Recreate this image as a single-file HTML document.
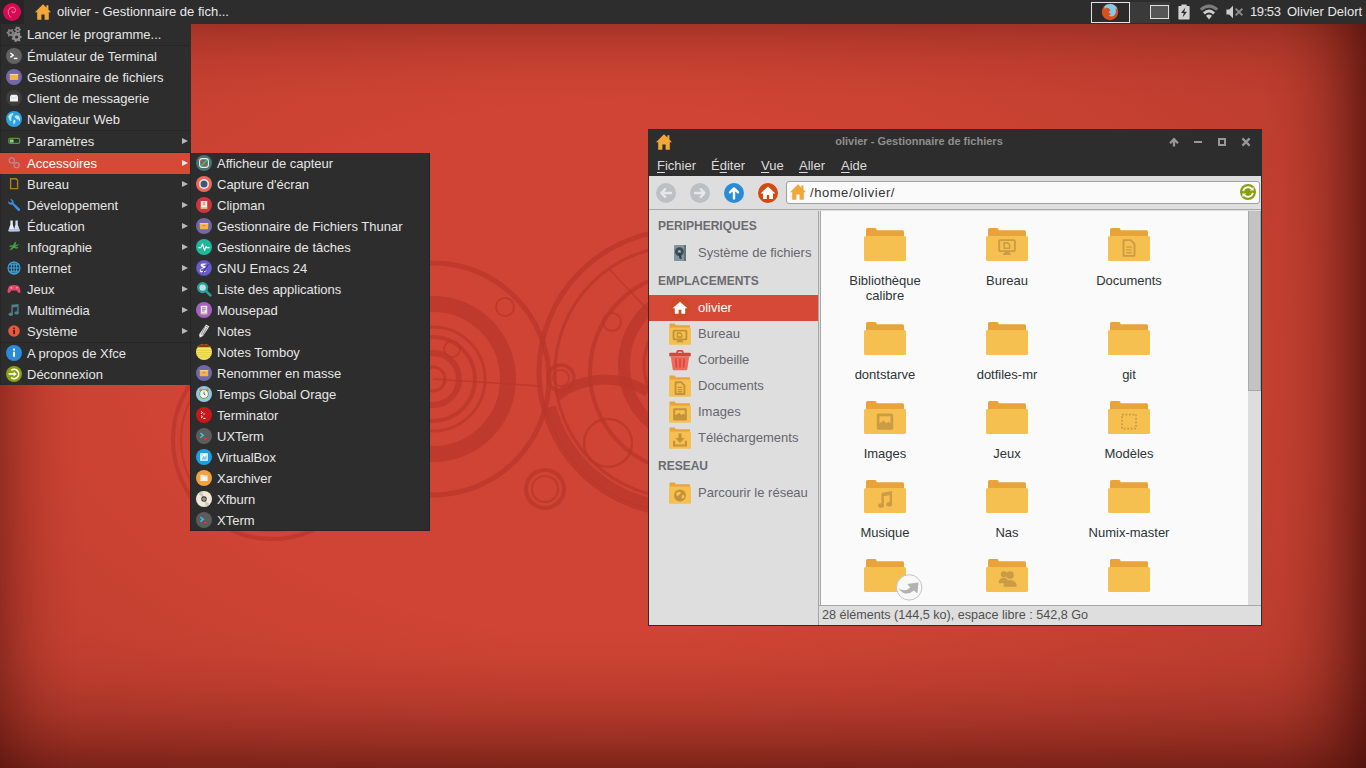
<!DOCTYPE html>
<html lang="fr"><head><meta charset="utf-8"><title>Bureau Xfce</title>
<style>
*{box-sizing:border-box;margin:0;padding:0}
html,body{width:1366px;height:768px;overflow:hidden}
body{font-family:"Liberation Sans",sans-serif;font-size:13px;position:relative;background:#cd4232;color:#dcdcdc}
svg{display:block}
#wall{position:absolute;left:0;top:0;width:1366px;height:768px;background:radial-gradient(ellipse 60% 62% at 44% 48%,rgba(60,10,5,0) 55%,rgba(60,10,5,.08) 85%,rgba(60,10,5,.16) 115%),linear-gradient(to left,rgba(60,10,5,0.620) 0px,rgba(60,10,5,0.384) 21px,rgba(60,10,5,0.205) 42px,rgba(60,10,5,0.087) 63px,rgba(60,10,5,0.025) 84px,rgba(60,10,5,0.000) 105px),linear-gradient(to right,rgba(60,10,5,0.360) 0px,rgba(60,10,5,0.223) 17px,rgba(60,10,5,0.119) 34px,rgba(60,10,5,0.050) 51px,rgba(60,10,5,0.014) 68px,rgba(60,10,5,0.000) 85px),linear-gradient(to top,rgba(60,10,5,0.520) 0px,rgba(60,10,5,0.322) 28px,rgba(60,10,5,0.172) 56px,rgba(60,10,5,0.073) 84px,rgba(60,10,5,0.021) 112px,rgba(60,10,5,0.000) 140px),linear-gradient(to bottom,rgba(60,10,5,0.440) 0px,rgba(60,10,5,0.273) 20px,rgba(60,10,5,0.145) 40px,rgba(60,10,5,0.062) 60px,rgba(60,10,5,0.018) 80px,rgba(60,10,5,0.000) 100px),#cf4434}
#deco{position:absolute;left:0;top:0}
#panel{position:absolute;left:0;top:0;width:1366px;height:24px;background:#2d2d2d;color:#e8e8e8}
#panel .abs{position:absolute}
#mbtn{position:absolute;left:0;top:0;width:24px;height:24px;background:#252525}
#task{position:absolute;left:35px;top:4px}
#tasklbl{position:absolute;left:57px;top:0;line-height:23px;height:24px;white-space:nowrap}
.menu{position:absolute;background:#2d2d2d;color:#e6e6e6}
#mainmenu{left:0;top:24px;width:191px;height:361px;border-left:1px solid #262626}
#submenu{left:190px;top:153px;width:240px;height:378px;border:1px solid #262626;border-top:0;border-right-color:#222;z-index:2}
.mi{position:relative;height:21px;line-height:21px;white-space:nowrap}
#mainmenu .mi{width:189px}
.mi.sel{background:#d64937;color:#fff}
#mainmenu .mi.sel{margin-left:-1px;width:190px;padding-left:1px}
#mainmenu .mi.sel .ic{left:6px}
#mainmenu .mi.sel .lb{left:27px}
#mainmenu .mi.sel .arr{left:182px}
.mi .ic{position:absolute;left:5px;top:2px;width:16px;height:16px}
#submenu .mi .ic{left:5px;top:1.5px}
.mi .lb{position:absolute;left:26px;top:0}
#submenu .mi .lb{left:26px;top:0}
.mi .arr{position:absolute;left:181px;top:7px;width:0;height:0;border-left:6px solid #b8b8b8;border-top:3.5px solid transparent;border-bottom:3.5px solid transparent}
.mi.sel .arr{border-left-color:#f4e6e2}
.sep{height:1px;background:#262626;width:189px}
/* window */
#win{position:absolute;left:648px;top:129px;width:614px;height:497px;background:#2d2d2d}
#win .abs{position:absolute}
#title{position:absolute;left:24px;top:0;width:494px;height:24px;color:#8f8f8f;font-weight:bold;font-size:11px;text-align:center;line-height:24px}
#menubar{position:absolute;left:0;top:24px;width:614px;height:23px;color:#dcdcdc}
#menubar span{position:absolute;top:1px;line-height:24px}
#menubar u{text-decoration:underline;text-underline-offset:2px}
#body{position:absolute;left:1px;top:47px;width:612px;height:449px;background:#dedede}
#toolbar{position:absolute;left:0;top:0;width:612px;height:34px;background:#dedede;border-bottom:1px solid #a8a8a8}
#loc{position:absolute;left:137px;top:5px;width:474px;height:23px;background:#fafafa;border:1px solid #a0a0a0;border-radius:3px;color:#333}
#loc .t{position:absolute;left:23px;top:0;line-height:21px;letter-spacing:.55px}
#side{position:absolute;left:0;top:35px;width:169px;height:414px;background:#dedede;color:#66666e}
#side .h{position:absolute;left:9px;font-weight:bold;font-size:12px;color:#6b6b70;line-height:16px}
#side .r{position:absolute;left:0;width:169px;height:26px;line-height:26px}
#side .r.sel{background:#d64937;color:#fff}
#side .r .ic{position:absolute;left:20px;top:2px;width:22px;height:22px}
#side .r .lb{position:absolute;left:49px;top:0;white-space:nowrap}
#split{position:absolute;left:169px;top:35px;width:3px;height:414px;background:#dedede;border-left:1px solid #a6a6a6;border-right:1px solid #a6a6a6}
#view{position:absolute;left:172px;top:35px;width:427px;height:394px;background:#fafafa;overflow:hidden;color:#2e3436}
#view .f{position:absolute;width:122px;text-align:center;line-height:15px}
#view .f svg{position:absolute;left:37px;top:0}
#view .f .n{position:absolute;left:0;top:52px;width:122px;text-align:center}
#sb{position:absolute;left:599px;top:35px;width:13px;height:394px;background:#dddddd}
#sb .th{position:absolute;left:0;top:0;width:13px;height:180px;background:#c3c3c3;border:1px solid #a9a9a9;border-top:0}
#status{position:absolute;left:170px;top:429px;width:442px;height:20px;background:#dedede;border-top:1px solid #a8a8a8;color:#505050;font-size:12.6px;line-height:19px}
#status span{position:absolute;left:3px;top:0;white-space:nowrap}

</style></head>
<body>
<div id="wall"></div>
<svg id="deco" width="1366" height="768" viewBox="0 0 1366 768">
<g fill="none" stroke="#b8362a" stroke-opacity="0.7">
<circle cx="433" cy="379" r="116" stroke-width="5"/>
<circle cx="433" cy="379" r="75" stroke-width="16"/>
<circle cx="433" cy="379" r="52" stroke-width="3"/>
<circle cx="433" cy="379" r="42" stroke-width="4"/>
<circle cx="433" cy="379" r="26" stroke-width="6"/>
<circle cx="433" cy="379" r="12" stroke-width="3"/>
<circle cx="505" cy="307" r="9" stroke-width="2"/>
<circle cx="452" cy="349" r="8" stroke-width="2"/>
<path d="M433 379 L540 386" stroke-width="1.5"/>
<circle cx="561" cy="378" r="13" stroke-width="3.5"/>
<circle cx="561" cy="378" r="8" stroke-width="1.5"/>
<circle cx="681" cy="372" r="142" stroke-width="5"/>
<circle cx="681" cy="372" r="126" stroke-width="3"/>
<circle cx="690" cy="372" r="100" stroke-width="4"/>
<circle cx="700" cy="365" r="76" stroke-width="12"/>
<circle cx="700" cy="365" r="56" stroke-width="3"/>
<circle cx="545" cy="489" r="19" stroke-width="4"/>
<circle cx="545" cy="489" r="13" stroke-width="2"/>
<circle cx="272" cy="440" r="99" stroke-width="4"/>
<circle cx="272" cy="440" r="91" stroke-width="2"/>
<circle cx="608" cy="443" r="24" stroke-width="2.5"/>
<circle cx="612" cy="322" r="9" stroke-width="2"/>
<path d="M557 396 A 80 80 0 0 1 648 392" stroke-width="10"/>
<path d="M550.6 406.9 A135 135 0 0 0 657.6 504.9" stroke-width="11"/>
<path d="M610 270 L648 310" stroke-width="1.5"/>
</g>
</svg>

<div id="panel">
<div id="mbtn"><svg width="24" height="24" viewBox="0 0 24 24"><circle cx="12" cy="12" r="9" fill="#d70a53"/><path d="M10.6 17.2 Q7.6 14.6 8.2 10.8 Q9.2 7.2 12.6 7.2 Q15.6 7.6 15.6 10.4 Q15.2 12.8 13 12.8 Q11.6 12.4 12 11" fill="none" stroke="#f08aa8" stroke-width="0.9" stroke-linecap="round"/></svg></div>
<div id="task"><svg width="16" height="16" viewBox="0 0 16 16"><path d="M8 0.2 L0 8.2 H2.2 V15.8 H6.4 V10.4 H9.6 V15.8 H13.8 V8.2 H16 L13.4 5.6 V1.2 H11.4 V3.6 Z" fill="#f2a73b"/></svg></div>
<div id="tasklbl">olivier - Gestionnaire de fich...</div>
<div class="abs" style="left:1091px;top:2px;width:39px;height:21px;border:1px solid #e2e2e2;background:#2b2b2b"></div>
<div class="abs" style="left:1130px;top:2px;width:40px;height:21px;background:#3a3a3a"></div>
<svg class="abs" style="left:1101px;top:3px" width="18" height="18" viewBox="0 0 18 18">
<circle cx="9" cy="9" r="8.2" fill="#d8501e"/>
<path d="M9 0.9 A8.1 8.1 0 0 1 16.6 6.4 Q15.2 5.2 14.4 5.6 Q15.6 8 14.6 10.6 Q13.4 13.4 10.4 13.6 Q8.4 13.4 7.6 12 Q9.4 12.2 10 10.8 Q8.6 10.6 7.8 9.6 Q7.4 8.4 8.6 8.2 L9.8 7 Q8 6.6 7.6 5 Q6 5.4 5.2 4.2 Q4.2 5 4 6.4 Q3 4.6 3.6 3 A8.1 8.1 0 0 1 9 0.9 Z" fill="#7fcdea"/>
</svg>
<div class="abs" style="left:1150px;top:5px;width:19px;height:14px;border:1px solid #e0e0e0;background:#565656"></div>
<svg class="abs" style="left:1178px;top:4px" width="12" height="16" viewBox="0 0 12 16"><path d="M3.4 0.6 H8.6 V2 H11 Q11.6 2 11.6 2.6 V14.8 Q11.6 15.4 11 15.4 H1 Q0.4 15.4 0.4 14.8 V2.6 Q0.4 2 1 2 H3.4 Z" fill="#d2d2d2"/><path d="M7.4 3.6 L3 9 H5.8 L4.6 13.6 L9 7.8 H6.2 Z" fill="#2d2d2d"/></svg>
<svg class="abs" style="left:1199px;top:3px" width="20" height="17" viewBox="0 0 20 17">
<path d="M0.8 5.4 Q10 -2.6 19.2 5.4 L17.2 7.8 Q10 1.6 2.8 7.8 Z" fill="#7c7c7c"/>
<path d="M4 9.2 Q10 4 16 9.2 L14.2 11.4 Q10 7.8 5.8 11.4 Z" fill="#cfcfcf"/>
<path d="M7 12.8 Q10 10.2 13 12.8 L10 16.4 Z" fill="#cfcfcf"/>
</svg>
<svg class="abs" style="left:1226px;top:5px" width="18" height="14" viewBox="0 0 18 14"><path d="M0.4 4.4 H3.2 L7 0.8 V13.2 L3.2 9.6 H0.4 Z" fill="#cdcdcd"/><path d="M9.6 3.6 L16.4 10.4 M16.4 3.6 L9.6 10.4" stroke="#8c8c8c" stroke-width="1.8"/></svg>
<div class="abs" style="left:1250px;top:0;line-height:23px;white-space:nowrap;letter-spacing:-0.4px">19:53</div>
<div class="abs" style="left:1287px;top:0;line-height:23px;white-space:nowrap">Olivier Delort</div>
</div>

<div class="menu" id="mainmenu">
<div class="mi"><span class="ic"><svg width="16" height="16" viewBox="0 0 16 16"><path d="M15.87 10.41 L15.87 11.59 L14.38 12.32 L13.99 13.13 L14.35 14.75 L13.42 15.49 L11.92 14.78 L11.05 14.97 L10.01 16.27 L8.85 16.00 L8.47 14.39 L7.77 13.83 L6.11 13.82 L5.60 12.75 L6.63 11.45 L6.63 10.55 L5.60 9.25 L6.11 8.18 L7.77 8.17 L8.47 7.61 L8.85 6.00 L10.01 5.73 L11.05 7.03 L11.92 7.22 L13.42 6.51 L14.35 7.25 L13.99 8.87 L14.38 9.68 Z M9.00 11.00 a1.6 1.6 0 1 0 3.2 0 a1.6 1.6 0 1 0 -3.2 0 Z" fill="#8d8d8d" fill-rule="evenodd"/><path d="M8.76 6.25 L8.76 7.35 L7.46 7.99 L7.06 8.69 L7.16 10.13 L6.21 10.68 L5.00 9.87 L4.20 9.87 L2.99 10.68 L2.04 10.13 L2.14 8.69 L1.74 7.99 L0.44 7.35 L0.44 6.25 L1.74 5.61 L2.14 4.91 L2.04 3.47 L2.99 2.92 L4.20 3.73 L5.00 3.73 L6.21 2.92 L7.16 3.47 L7.06 4.91 L7.46 5.61 Z M3.40 6.80 a1.2 1.2 0 1 0 2.4 0 a1.2 1.2 0 1 0 -2.4 0 Z" fill="#808080" fill-rule="evenodd"/><path d="M14.87 3.17 L14.87 4.03 L13.82 4.52 L13.50 5.06 L13.61 6.22 L12.86 6.65 L11.91 5.98 L11.29 5.98 L10.34 6.65 L9.59 6.22 L9.70 5.06 L9.38 4.52 L8.33 4.03 L8.33 3.17 L9.38 2.68 L9.70 2.14 L9.59 0.98 L10.34 0.55 L11.29 1.22 L11.91 1.22 L12.86 0.55 L13.61 0.98 L13.50 2.14 L13.82 2.68 Z M10.70 3.60 a0.9 0.9 0 1 0 1.8 0 a0.9 0.9 0 1 0 -1.8 0 Z" fill="#8d8d8d" fill-rule="evenodd"/></svg></span><span class="lb">Lancer le programme...</span></div>
<div class="sep"></div>
<div class="mi"><span class="ic"><svg width="16" height="16" viewBox="0 0 16 16"><circle cx="8" cy="8" r="8" fill="#626262"/><path d="M4.4 5 L7.2 7.2 L4.4 9.4" fill="none" stroke="#fff" stroke-width="1.5"/><path d="M7.8 10.4 H11.4" stroke="#fff" stroke-width="1.5"/></svg></span><span class="lb">Émulateur de Terminal</span></div>
<div class="mi"><span class="ic"><svg width="16" height="16" viewBox="0 0 16 16"><circle cx="8" cy="8" r="8" fill="#7068a8"/><rect x="3.8" y="5" width="8.4" height="6" rx="0.6" fill="#f4b24a"/><path d="M3.8 5.5 H12.2" stroke="#f9d48a" stroke-width="1.2"/></svg></span><span class="lb">Gestionnaire de fichiers</span></div>
<div class="mi"><span class="ic"><svg width="16" height="16" viewBox="0 0 16 16"><circle cx="8" cy="8" r="8" fill="#3d3d3d"/><path d="M4 6.2 L5.4 4.8 H10.6 L12 6.2 V11.4 H4 Z" fill="#f4f4f4"/><path d="M4 6.4 L8 8.4 L12 6.4" fill="none" stroke="#cfcfcf" stroke-width="0.8"/></svg></span><span class="lb">Client de messagerie</span></div>
<div class="mi"><span class="ic"><svg width="16" height="16" viewBox="0 0 16 16"><circle cx="8" cy="8" r="8" fill="#2ba1df"/><path d="M2.2 5.4 Q3.6 2.6 6.6 2 Q8 2.6 7 4 Q5.4 4.4 5.6 6 Q4.6 7.6 5.6 9 Q5.2 10.6 4.2 10 Q2.8 8 2.2 5.4 Z M8.6 5 Q10.8 3.6 13 5 Q14.6 7.4 13.6 10.6 Q12.6 9.8 12.4 8.4 Q10.6 8.6 10 7.4 Q8.6 6.6 8.6 5 Z M7.6 8.4 Q9.4 8.6 9.6 10.4 Q9 12.8 7.6 13.6 Q6.8 11 7.6 8.4 Z" fill="#bfe6f7"/></svg></span><span class="lb">Navigateur Web</span></div>
<div class="sep"></div>
<div class="mi"><span class="ic"><svg width="16" height="16" viewBox="0 0 16 16"><rect x="2.8" y="5.4" width="10.8" height="5" rx="1.3" fill="none" stroke="#4f9a32" stroke-width="1.3"/><rect x="3.8" y="6.4" width="3.8" height="3" rx="0.5" fill="#9ad07c"/></svg></span><span class="lb">Paramètres</span><span class="arr"></span></div>
<div class="sep"></div>
<div class="mi sel"><span class="ic"><svg width="16" height="16" viewBox="0 0 16 16"><circle cx="5.8" cy="5.4" r="2.6" fill="none" stroke="#b49ac0" stroke-opacity="0.8" stroke-width="1.1"/><circle cx="10.6" cy="10.2" r="2.6" fill="none" stroke="#b49ac0" stroke-opacity="0.8" stroke-width="1.1"/></svg></span><span class="lb">Accessoires</span><span class="arr"></span></div>
<div class="mi"><span class="ic"><svg width="16" height="16" viewBox="0 0 16 16"><path d="M4.6 2.8 H10.2 L11.6 4.2 V12.6 H4.6 Z" fill="none" stroke="#b27e1d" stroke-width="1.4"/></svg></span><span class="lb">Bureau</span><span class="arr"></span></div>
<div class="mi"><span class="ic"><svg width="16" height="16" viewBox="0 0 16 16"><path d="M2.2 4 Q1.8 7 4.8 7.8 L6.2 7.4 L11.6 13.6 Q12.8 14.6 13.8 13.6 Q14.6 12.6 13.6 11.6 L7.6 6 Q8 3 5.2 2 L4.2 2.4 L6 4.2 L5.4 5.6 L4 5.8 L2.2 4 Z" fill="#3a90e0"/></svg></span><span class="lb">Développement</span><span class="arr"></span></div>
<div class="mi"><span class="ic"><svg width="16" height="16" viewBox="0 0 16 16"><path d="M4.4 2.6 H6.8 V6.4 L8.6 12.6 Q8.6 13.6 7.6 13.6 H3.2 Q2.2 13.6 2.4 12.6 L4.4 6.4 Z" fill="#e6eefb"/><path d="M9.4 2.6 H11.8 V6.4 L13.8 12.6 Q14 13.6 13 13.6 H8.6 Q7.6 13.6 7.8 12.6 L9.4 6.4 Z" fill="#cfdcf2"/><path d="M3.2 11 H8 L8.6 12.8 H2.6 Z M8.6 11 H13.2 L13.8 12.8 H8 Z" fill="#a8c0e8"/></svg></span><span class="lb">Éducation</span><span class="arr"></span></div>
<div class="mi"><span class="ic"><svg width="16" height="16" viewBox="0 0 16 16"><path d="M2.6 11.6 Q6 8.6 7.4 5.4 Q8.4 3 10.4 2.4 Q9.8 4.4 9.4 6 Q11.8 5.2 13.6 5.6 Q10.6 7.2 8.8 8.2 Q6.6 9.4 5.8 11.2 Q5.2 9.8 2.6 11.6 Z" fill="#3da53b"/><path d="M3.6 7.6 Q5.6 6.2 7.4 7.8 Q9.6 9.6 12 8.4" fill="none" stroke="#3da53b" stroke-width="1.3"/></svg></span><span class="lb">Infographie</span><span class="arr"></span></div>
<div class="mi"><span class="ic"><svg width="16" height="16" viewBox="0 0 16 16"><g fill="none" stroke="#39a6e0" stroke-width="1.1"><circle cx="8" cy="8" r="6"/><ellipse cx="8" cy="8" rx="2.8" ry="6"/><path d="M2 8 H14 M8 2 V14 M3 4.8 H13 M3 11.2 H13"/></g></svg></span><span class="lb">Internet</span><span class="arr"></span></div>
<div class="mi"><span class="ic"><svg width="16" height="16" viewBox="0 0 16 16"><path d="M4.4 4.6 Q8 3.6 11.6 4.6 Q13.6 5.2 14.4 9.4 Q14.8 12.2 13.2 12 Q12 11.6 10.6 9.4 H5.4 Q4 11.6 2.8 12 Q1.2 12.2 1.6 9.4 Q2.4 5.2 4.4 4.6 Z" fill="#e0496b"/><circle cx="11" cy="6.8" r="0.8" fill="#f7b0c0"/><path d="M4.4 6.8 H6.4 M5.4 5.8 V7.8" stroke="#f7b0c0" stroke-width="0.8"/></svg></span><span class="lb">Jeux</span><span class="arr"></span></div>
<div class="mi"><span class="ic"><svg width="16" height="16" viewBox="0 0 16 16"><g fill="#4f7f8c"><path d="M5.4 2.8 L12.6 2 V11 H11.2 V5 L6.8 5.6 V12.4 H5.4 Z"/><ellipse cx="4.8" cy="12.2" rx="2.2" ry="1.7"/><ellipse cx="10.6" cy="10.9" rx="2.2" ry="1.7"/></g></svg></span><span class="lb">Multimédia</span><span class="arr"></span></div>
<div class="mi"><span class="ic"><svg width="16" height="16" viewBox="0 0 16 16"><circle cx="8" cy="8" r="5.8" fill="#e9573f"/><rect x="7.2" y="7" width="1.7" height="4.2" fill="#4a1a10"/><rect x="7.2" y="4.6" width="1.7" height="1.6" fill="#4a1a10"/></svg></span><span class="lb">Système</span><span class="arr"></span></div>
<div class="sep"></div>
<div class="mi"><span class="ic"><svg width="16" height="16" viewBox="0 0 16 16"><circle cx="8" cy="8" r="8" fill="#2a8bd8"/><rect x="7.1" y="6.8" width="1.9" height="5" fill="#fff"/><rect x="7.1" y="3.6" width="1.9" height="2" fill="#fff"/></svg></span><span class="lb">A propos de Xfce</span></div>
<div class="mi"><span class="ic"><svg width="16" height="16" viewBox="0 0 16 16"><circle cx="8" cy="8" r="8" fill="#8a9f11"/><path d="M5.2 4.4 A4.6 4.6 0 1 1 5.2 11.6" fill="none" stroke="#fff" stroke-width="1.6"/><path d="M2.6 8 H8.6" stroke="#fff" stroke-width="1.6"/><path d="M7.6 5.4 L10.6 8 L7.6 10.6 Z" fill="#fff"/></svg></span><span class="lb">Déconnexion</span></div>
</div>
<div class="menu" id="submenu">
<div class="mi"><span class="ic"><svg width="16" height="16" viewBox="0 0 16 16"><circle cx="8" cy="8" r="8" fill="#4a7272"/><rect x="3.6" y="3.6" width="8.8" height="8.8" rx="2.6" fill="none" stroke="#e8eeee" stroke-width="1.1"/><path d="M5 5 L11 11" stroke="#e0444c" stroke-width="1.2"/><path d="M11 5 L5 11" stroke="#3fcf4a" stroke-width="1.2"/></svg></span><span class="lb">Afficheur de capteur</span></div>
<div class="mi"><span class="ic"><svg width="16" height="16" viewBox="0 0 16 16"><circle cx="8" cy="8" r="8" fill="#f0685a"/><circle cx="8" cy="8" r="4.9" fill="#f6f2f2"/><circle cx="8" cy="8" r="3.5" fill="#3c5a77"/></svg></span><span class="lb">Capture d'écran</span></div>
<div class="mi"><span class="ic"><svg width="16" height="16" viewBox="0 0 16 16"><circle cx="8" cy="8" r="8" fill="#d0343c"/><rect x="4.8" y="4" width="6.4" height="8" rx="0.6" fill="#fbeee6"/><rect x="4.8" y="10.2" width="6.4" height="1.8" fill="#e8b088"/><rect x="6.8" y="5" width="2.4" height="3.4" fill="#e8a090"/></svg></span><span class="lb">Clipman</span></div>
<div class="mi"><span class="ic"><svg width="16" height="16" viewBox="0 0 16 16"><circle cx="8" cy="8" r="8" fill="#7068a8"/><rect x="3.8" y="5" width="8.4" height="6.2" rx="0.6" fill="#f4b24a"/><path d="M3.8 5.6 H12.2" stroke="#f8cf7e" stroke-width="1.2"/><path d="M6 7 H10 L8 8.6 Z" fill="#d08a2a"/></svg></span><span class="lb">Gestionnaire de Fichiers Thunar</span></div>
<div class="mi"><span class="ic"><svg width="16" height="16" viewBox="0 0 16 16"><circle cx="8" cy="8" r="8" fill="#1fb89a"/><path d="M2.4 8.6 H5 L6.4 5 L8.6 11.4 L10 7.6 L10.8 8.6 H13.6" fill="none" stroke="#fff" stroke-width="1.1" stroke-linejoin="round"/></svg></span><span class="lb">Gestionnaire de tâches</span></div>
<div class="mi"><span class="ic"><svg width="16" height="16" viewBox="0 0 16 16"><circle cx="8" cy="8" r="8" fill="#5a4db8"/><circle cx="8" cy="8" r="7.2" fill="#6a5cc8"/><path d="M5.4 3.8 Q8.6 3 10.8 3.8 Q8 5.2 6.4 5.6 Q8.8 6 10.6 7 Q7 8.2 5 9.6 Q4 10.6 5.6 11 Q8.6 11.4 11 10.6 Q9 12.6 6 12.6 Q3.4 12.2 3.6 10.4 Q4.4 8.6 7.2 7.6 Q4.8 6.8 4.6 5.6 Q4.4 4.6 5.4 3.8 Z" fill="#f4f2fc"/><path d="M12.4 4.4 L6.4 13.2" stroke="#2c2470" stroke-width="0.9"/></svg></span><span class="lb">GNU Emacs 24</span></div>
<div class="mi"><span class="ic"><svg width="16" height="16" viewBox="0 0 16 16"><circle cx="6.6" cy="6.6" r="5.6" fill="#25a597"/><circle cx="6.6" cy="6.6" r="3.2" fill="#c3dcea"/><path d="M10.4 10.4 L14.4 14.4" stroke="#25a597" stroke-width="2.6" stroke-linecap="round"/></svg></span><span class="lb">Liste des applications</span></div>
<div class="mi"><span class="ic"><svg width="16" height="16" viewBox="0 0 16 16"><circle cx="8" cy="8" r="8" fill="#a563bd"/><rect x="4.8" y="3.8" width="6.4" height="8.4" rx="0.5" fill="#efe6f2"/><path d="M6 5.8 H9.8 M6 7.4 H9.8 M6 9 H8.6" stroke="#8c7a98" stroke-width="0.9"/><rect x="4.8" y="10.8" width="6.4" height="1.4" fill="#d8c0a8"/></svg></span><span class="lb">Mousepad</span></div>
<div class="mi"><span class="ic"><svg width="16" height="16" viewBox="0 0 16 16"><path d="M10 1.6 L13.4 3.4 L7 13 L3 15 L3.4 11 Z" fill="#ececec"/><path d="M8.8 4 L5.2 11.6 M10.6 5 L6.6 12.4 M9.2 2.8 L12.6 4.6" stroke="#6a6a6a" stroke-width="0.8"/><path d="M3.2 13 L4.6 14.2 L3 15 Z" fill="#444"/></svg></span><span class="lb">Notes</span></div>
<div class="mi"><span class="ic"><svg width="16" height="16" viewBox="0 0 16 16"><circle cx="8" cy="8" r="8" fill="#f4e55a"/><path d="M1.6 3.2 A8 8 0 0 1 14.4 3.2 Z" fill="#8a3a12"/><path d="M0.4 6.4 H15.6 M0.2 8.6 H15.8 M0.6 10.8 H15.4 M2 13 H14" stroke="#d8c63c" stroke-width="0.7"/></svg></span><span class="lb">Notes Tomboy</span></div>
<div class="mi"><span class="ic"><svg width="16" height="16" viewBox="0 0 16 16"><circle cx="8" cy="8" r="8" fill="#7068a8"/><rect x="3.8" y="5" width="8.4" height="6.2" rx="0.6" fill="#f4b24a"/><path d="M3.8 5.6 H12.2" stroke="#f8cf7e" stroke-width="1.2"/><path d="M6 7 H10 L8 8.6 Z" fill="#d08a2a"/></svg></span><span class="lb">Renommer en masse</span></div>
<div class="mi"><span class="ic"><svg width="16" height="16" viewBox="0 0 16 16"><circle cx="8" cy="8" r="8" fill="#8fc8ea"/><path d="M4.2 12.8 L5.4 11.4 M11.8 12.8 L10.6 11.4" stroke="#e8b83a" stroke-width="1.2"/><circle cx="4.6" cy="3.8" r="1.3" fill="#e87a3a"/><circle cx="11.4" cy="3.8" r="1.3" fill="#e87a3a"/><circle cx="8" cy="8" r="4.4" fill="#f7f7ee" stroke="#6aa060" stroke-width="1"/><path d="M8 5.6 V8.2 L9.4 9" fill="none" stroke="#4a6a4a" stroke-width="0.9"/></svg></span><span class="lb">Temps Global Orage</span></div>
<div class="mi"><span class="ic"><svg width="16" height="16" viewBox="0 0 16 16"><circle cx="8" cy="8" r="8" fill="#c9181c"/><path d="M5 4.4 L6.6 5.6 L5 6.8" fill="none" stroke="#fff" stroke-width="1"/><path d="M7.4 7 H8.8" stroke="#fff" stroke-width="1"/><path d="M5 8.6 L6.6 9.8 L5 11" fill="none" stroke="#fff" stroke-width="1"/><path d="M7.4 11.4 H9.4" stroke="#fff" stroke-width="1"/></svg></span><span class="lb">Terminator</span></div>
<div class="mi"><span class="ic"><svg width="16" height="16" viewBox="0 0 16 16"><circle cx="8" cy="8" r="8" fill="#5c5c5c"/><path d="M4.4 5 L7.2 7.3 L4.4 9.6" fill="none" stroke="#36c4e0" stroke-width="1.5"/><path d="M7.8 10.6 H11.4" stroke="#e8303a" stroke-width="1.5"/></svg></span><span class="lb">UXTerm</span></div>
<div class="mi"><span class="ic"><svg width="16" height="16" viewBox="0 0 16 16"><circle cx="8" cy="8" r="8" fill="#1c9fe2"/><rect x="4.2" y="4.2" width="7.6" height="7.6" fill="#f4fbff"/><path d="M5.4 10.6 L7.6 6.8 L8.8 8.6 L10.6 5.4 V10.6 Z" fill="#7cc4ea"/><path d="M5.2 5.4 H7 M5.2 6.6 H6.4" stroke="#7cc4ea" stroke-width="0.7"/></svg></span><span class="lb">VirtualBox</span></div>
<div class="mi"><span class="ic"><svg width="16" height="16" viewBox="0 0 16 16"><circle cx="8" cy="8" r="8" fill="#f0a23f"/><path d="M4.4 4.8 H7 L7.8 5.6 H11.6 V11 H4.4 Z" fill="#fbf3ea"/><path d="M4.4 6.6 H11.6" stroke="#e4d2be" stroke-width="0.7"/></svg></span><span class="lb">Xarchiver</span></div>
<div class="mi"><span class="ic"><svg width="16" height="16" viewBox="0 0 16 16"><circle cx="8" cy="8" r="8" fill="#efe9d6"/><path d="M8 8 L2.4 2.4 A8 8 0 0 1 6 0.3 Z M8 8 L13.6 13.6 A8 8 0 0 1 10 15.7 Z" fill="#cfcabb"/><circle cx="8" cy="8" r="2.7" fill="#2f2f2f"/><circle cx="8" cy="8" r="1.6" fill="#efe9d6"/><circle cx="8" cy="8" r="0.8" fill="#2f2f2f"/></svg></span><span class="lb">Xfburn</span></div>
<div class="mi"><span class="ic"><svg width="16" height="16" viewBox="0 0 16 16"><circle cx="8" cy="8" r="8" fill="#5c5c5c"/><path d="M4.4 5 L7.2 7.3 L4.4 9.6" fill="none" stroke="#36c4e0" stroke-width="1.5"/><path d="M7.8 10.6 H11.4" stroke="#e8303a" stroke-width="1.5"/></svg></span><span class="lb">XTerm</span></div>
</div>
<div id="win">
<div class="abs" style="left:8px;top:5px"><svg width="16" height="16" viewBox="0 0 16 16"><path d="M8 0.2 L0 8.2 H2.2 V15.8 H6.4 V10.4 H9.6 V15.8 H13.8 V8.2 H16 L13.4 5.6 V1.2 H11.4 V3.6 Z" fill="#f2a73b"/></svg></div>
<div id="title">olivier - Gestionnaire de fichiers</div>
<svg class="abs" style="left:520px;top:8px" width="12" height="11" viewBox="0 0 12 11"><path d="M6 9.6 V3 M2 6.2 L6 2.2 L10 6.2" fill="none" stroke="#989898" stroke-width="2.3" stroke-linejoin="miter"/></svg>
<div class="abs" style="left:546px;top:12px;width:8px;height:2px;background:#989898"></div>
<div class="abs" style="left:570px;top:9px;width:8px;height:8px;border:2px solid #989898"></div>
<svg class="abs" style="left:593px;top:8px" width="10" height="10" viewBox="0 0 10 10"><path d="M1.4 1.4 L8.6 8.6 M8.6 1.4 L1.4 8.6" stroke="#989898" stroke-width="2.2"/></svg>
<div id="menubar"><span style="left:9px"><u>F</u>ichier</span><span style="left:63px">É<u>d</u>iter</span><span style="left:113px"><u>V</u>ue</span><span style="left:151px"><u>A</u>ller</span><span style="left:193px"><u>A</u>ide</span></div>
<div id="body">
<div id="toolbar"><svg class="abs" style="left:7px;top:7px" width="20" height="20" viewBox="0 0 20 20"><circle cx="10" cy="10" r="10" fill="#bdc0c2"/><path d="M15 10 H5.6 M9.2 6.2 L5.4 10 L9.2 13.8" fill="none" stroke="#e6e7e8" stroke-width="2.4" stroke-linecap="round" stroke-linejoin="round"/></svg>
<svg class="abs" style="left:41px;top:7px" width="20" height="20" viewBox="0 0 20 20"><circle cx="10" cy="10" r="10" fill="#bdc0c2"/><path d="M5 10 H14.4 M10.8 6.2 L14.6 10 L10.8 13.8" fill="none" stroke="#e6e7e8" stroke-width="2.4" stroke-linecap="round" stroke-linejoin="round"/></svg>
<svg class="abs" style="left:75px;top:7px" width="20" height="20" viewBox="0 0 20 20"><circle cx="10" cy="10" r="10" fill="#2a8bd6"/><path d="M10 15.4 V5.6 M6 9.4 L10 5.4 L14 9.4" fill="none" stroke="#fff" stroke-width="2.4" stroke-linecap="round" stroke-linejoin="round"/></svg>
<svg class="abs" style="left:109px;top:7px" width="20" height="20" viewBox="0 0 20 20"><circle cx="10" cy="10" r="10" fill="#d5480f"/><path d="M10 3.6 L2.6 10.4 H5 V16 H8.8 V12 H11.2 V16 H15 V10.4 H17.4 Z" fill="#fff"/></svg>
<div id="loc"><div class="abs" style="left:3px;top:2px"><svg width="16" height="16" viewBox="0 0 16 16"><path d="M8 0.2 L0 8.2 H2.2 V15.8 H6.4 V10.4 H9.6 V15.8 H13.8 V8.2 H16 L13.4 5.6 V1.2 H11.4 V3.6 Z" fill="#f2a73b"/></svg></div><span class="t">/home/olivier/</span>
<svg class="abs" style="left:453px;top:2px" width="16" height="16" viewBox="0 0 17 17"><circle cx="8.5" cy="8.5" r="8.5" fill="#8a9f0e"/><path d="M3.4 7.6 A5.2 5.2 0 0 1 12.6 5.4" fill="none" stroke="#fff" stroke-width="1.9"/><path d="M13.6 9.4 A5.2 5.2 0 0 1 4.4 11.6" fill="none" stroke="#fff" stroke-width="1.9"/><path d="M10.6 6.8 L14.6 7 L14.2 3 Z M6.4 10.2 L2.4 10 L2.8 14 Z" fill="#fff"/></svg>
</div></div>
<div id="side">
<div class="h" style="top:7px">PERIPHERIQUES</div>
<div class="h" style="top:62px">EMPLACEMENTS</div>
<div class="h" style="top:247px">RESEAU</div>
<div class="r" style="top:29px"><span class="ic"><svg width="22" height="22" viewBox="0 0 22 22"><rect x="5" y="3" width="12" height="16" rx="0.6" fill="#7f979b"/><rect x="15" y="3" width="2" height="16" fill="#5e767a"/><circle cx="10.4" cy="9.6" r="4.4" fill="#3b4c54"/><circle cx="10.4" cy="9.4" r="1.5" fill="#a3b6ba"/><path d="M10.8 10.4 l2.2 6.4 h-2.4 l-1.2 -5.8 z" fill="#2d3c43"/></svg></span><span class="lb">Système de fichiers</span></div>
<div class="r sel" style="top:84px"><span class="ic"><svg width="22" height="22" viewBox="0 0 22 22"><circle cx="11" cy="11" r="10.4" fill="#cf4a26"/><path d="M11 4.8 L3.6 11.2 H5.8 V16.8 H9.6 V12.8 H12.4 V16.8 H16.2 V11.2 H18.4 Z" fill="#fff"/></svg></span><span class="lb">olivier</span></div>
<div class="r" style="top:110px"><span class="ic"><svg width="22" height="22" viewBox="0 0 22 22"><path d="M0.5 1.3 Q0.5 0.5 1.3 0.5 H5.6 Q6.4 0.5 6.4 1.3 V2.3 H20.2 Q21 2.3 21 3.1 V10 H0.5 Z" fill="#e8a33b"/><rect x="0" y="4.6" width="22" height="17.2" rx="1.2" fill="#f5c04f"/><g fill="none" stroke="#c3923b" stroke-width="1.9"><rect x="4.6" y="7.6" width="12.8" height="8.8" rx="0.6"/><path d="M8.4 10 h2.8 l1.6 1.6 v2.4 h-4.4 z" stroke-width="1.4"/></g><path d="M9.5 16.6 h3 l2.3 2.6 h-7.6 z" fill="#c3923b"/></svg></span><span class="lb">Bureau</span></div>
<div class="r" style="top:136px"><span class="ic"><svg width="22" height="22" viewBox="0 0 22 22"><path d="M7.4 2.8 Q7.4 1 9.2 1 H12.8 Q14.6 1 14.6 2.8 V4.2 H13 V2.8 H9 V4.2 H7.4 Z" fill="#d8473b"/><path d="M1.2 3.8 H20.8 Q21.8 3.8 21.8 4.8 V6.4 Q21.8 7.4 20.8 7.4 H1.2 Q0.2 7.4 0.2 6.4 V4.8 Q0.2 3.8 1.2 3.8 Z" fill="#d8473b"/><path d="M1.8 7.4 H20.2 L18.4 20 Q18.2 21.2 17 21.2 H5 Q3.8 21.2 3.6 20 Z" fill="#ef6a5d"/><path d="M6.8 10.2 L7.4 18 M11 10.2 V18 M15.2 10.2 L14.6 18" stroke="#d5493d" stroke-width="1.7" stroke-linecap="round"/></svg></span><span class="lb">Corbeille</span></div>
<div class="r" style="top:162px"><span class="ic"><svg width="22" height="22" viewBox="0 0 22 22"><path d="M0.5 1.3 Q0.5 0.5 1.3 0.5 H5.6 Q6.4 0.5 6.4 1.3 V2.3 H20.2 Q21 2.3 21 3.1 V10 H0.5 Z" fill="#e8a33b"/><rect x="0" y="4.6" width="22" height="17.2" rx="1.2" fill="#f5c04f"/><g fill="none" stroke="#c3923b" stroke-width="1.9" stroke-linejoin="round"><path d="M6.6 7.2 h5.6 l3.2 3.2 v8.6 h-8.8 z"/><path d="M8.8 12.4 h4.4 M8.8 14.6 h4.4 M8.8 16.8 h4.4" stroke-width="1.4"/></g></svg></span><span class="lb">Documents</span></div>
<div class="r" style="top:188px"><span class="ic"><svg width="22" height="22" viewBox="0 0 22 22"><path d="M0.5 1.3 Q0.5 0.5 1.3 0.5 H5.6 Q6.4 0.5 6.4 1.3 V2.3 H20.2 Q21 2.3 21 3.1 V10 H0.5 Z" fill="#e8a33b"/><rect x="0" y="4.6" width="22" height="17.2" rx="1.2" fill="#f5c04f"/><rect x="4.2" y="7.2" width="13.6" height="12.4" rx="1.2" fill="#c3923b"/><path d="M6.2 9.2 h9.6 v5 l-1.6 -1.6 l-1.8 1.4 l-2.2 -2.2 l-4 2.6 z" fill="#f5c04f"/></svg></span><span class="lb">Images</span></div>
<div class="r" style="top:214px"><span class="ic"><svg width="22" height="22" viewBox="0 0 22 22"><path d="M0.5 1.3 Q0.5 0.5 1.3 0.5 H5.6 Q6.4 0.5 6.4 1.3 V2.3 H20.2 Q21 2.3 21 3.1 V10 H0.5 Z" fill="#e8a33b"/><rect x="0" y="4.6" width="22" height="17.2" rx="1.2" fill="#f5c04f"/><g fill="#c3923b"><path d="M9.4 6.4 h3.2 v4.6 h3.2 l-4.8 5 l-4.8 -5 h3.2 z"/><path d="M4 13.8 h2.2 v3.6 h9.6 v-3.6 h2.2 v5.8 h-14 z"/></g></svg></span><span class="lb">Téléchargements</span></div>
<div class="r" style="top:269px"><span class="ic"><svg width="22" height="22" viewBox="0 0 22 22"><path d="M0.5 1.3 Q0.5 0.5 1.3 0.5 H5.6 Q6.4 0.5 6.4 1.3 V2.3 H20.2 Q21 2.3 21 3.1 V10 H0.5 Z" fill="#e8a33b"/><rect x="0" y="4.6" width="22" height="17.2" rx="1.2" fill="#f5c04f"/><circle cx="11" cy="13.4" r="6" fill="#c3923b"/><path d="M8 10.6 q2 -1.4 3.6 -0.6 q0.6 1.6 -1 2.4 q-1.6 0.4 -1.2 2 q-1.8 -0.4 -2.2 -2 q0 -1 0.8 -1.8 z M13.4 13 q1.6 -0.2 2.2 1 q-0.4 2 -2 3 q-1 -1 -0.8 -2.2 q-0.4 -1.2 0.6 -1.8 z" fill="#f5c04f"/></svg></span><span class="lb">Parcourir le réseau</span></div>
</div>
<div id="split"></div>
<div id="view">
<div class="f" style="left:3px;top:10px"><svg width="48" height="48" viewBox="0 0 48 48"><path d="M5 8.5 Q5 7 6.5 7 H14 Q15.5 7 15.5 8.5 V9.2 H41.5 Q43 9.2 43 10.7 V22 H5 Z" fill="#e8a33b"/><rect x="3" y="15" width="42" height="25" rx="1.6" fill="#f5c04f"/></svg><div class="n">Bibliothèque<br>calibre</div></div>
<div class="f" style="left:125px;top:10px"><svg width="48" height="48" viewBox="0 0 48 48"><path d="M5 8.5 Q5 7 6.5 7 H14 Q15.5 7 15.5 8.5 V9.2 H41.5 Q43 9.2 43 10.7 V22 H5 Z" fill="#e8a33b"/><rect x="3" y="15" width="42" height="25" rx="1.6" fill="#f5c04f"/><g transform="translate(24 27.6) scale(1.17) translate(-24 -27.5)"><g fill="none" stroke="#cb9b45" stroke-width="1.6"><rect x="17.3" y="20.3" width="13.4" height="9.4" rx="0.8"/><path d="M21.6 22.6 h3 l1.6 1.6 v3 h-4.6 z" stroke-width="1.3"/></g><path d="M22.5 30 h3 l2.2 3 h-7.4 z" fill="#cb9b45"/></g></svg><div class="n">Bureau</div></div>
<div class="f" style="left:247px;top:10px"><svg width="48" height="48" viewBox="0 0 48 48"><path d="M5 8.5 Q5 7 6.5 7 H14 Q15.5 7 15.5 8.5 V9.2 H41.5 Q43 9.2 43 10.7 V22 H5 Z" fill="#e8a33b"/><rect x="3" y="15" width="42" height="25" rx="1.6" fill="#f5c04f"/><g transform="translate(24 27.6) scale(1.17) translate(-24 -27.5)"><g fill="none" stroke="#cb9b45" stroke-width="1.6" stroke-linejoin="round"><path d="M19.3 20.3 h6.2 l3.2 3.2 v10.2 h-9.4 z"/><path d="M21.6 26.2 h4.8 M21.6 28.6 h4.8 M21.6 31 h4.8" stroke-width="1.2"/></g></g></svg><div class="n">Documents</div></div>
<div class="f" style="left:3px;top:104px"><svg width="48" height="48" viewBox="0 0 48 48"><path d="M5 8.5 Q5 7 6.5 7 H14 Q15.5 7 15.5 8.5 V9.2 H41.5 Q43 9.2 43 10.7 V22 H5 Z" fill="#e8a33b"/><rect x="3" y="15" width="42" height="25" rx="1.6" fill="#f5c04f"/></svg><div class="n">dontstarve</div></div>
<div class="f" style="left:125px;top:104px"><svg width="48" height="48" viewBox="0 0 48 48"><path d="M5 8.5 Q5 7 6.5 7 H14 Q15.5 7 15.5 8.5 V9.2 H41.5 Q43 9.2 43 10.7 V22 H5 Z" fill="#e8a33b"/><rect x="3" y="15" width="42" height="25" rx="1.6" fill="#f5c04f"/></svg><div class="n">dotfiles-mr</div></div>
<div class="f" style="left:247px;top:104px"><svg width="48" height="48" viewBox="0 0 48 48"><path d="M5 8.5 Q5 7 6.5 7 H14 Q15.5 7 15.5 8.5 V9.2 H41.5 Q43 9.2 43 10.7 V22 H5 Z" fill="#e8a33b"/><rect x="3" y="15" width="42" height="25" rx="1.6" fill="#f5c04f"/></svg><div class="n">git</div></div>
<div class="f" style="left:3px;top:183px"><svg width="48" height="48" viewBox="0 0 48 48"><path d="M5 8.5 Q5 7 6.5 7 H14 Q15.5 7 15.5 8.5 V9.2 H41.5 Q43 9.2 43 10.7 V22 H5 Z" fill="#e8a33b"/><rect x="3" y="15" width="42" height="25" rx="1.6" fill="#f5c04f"/><g transform="translate(24 27.6) scale(1.17) translate(-24 -27.5)"><rect x="17" y="20.5" width="14" height="14" rx="1.6" fill="#cb9b45"/><path d="M19.3 23 h9.4 v6.2 l-1.6 -1.8 l-1.8 1.5 l-2.4 -2.3 l-3.6 2.6 z" fill="#f5c04f"/></g></svg><div class="n">Images</div></div>
<div class="f" style="left:125px;top:183px"><svg width="48" height="48" viewBox="0 0 48 48"><path d="M5 8.5 Q5 7 6.5 7 H14 Q15.5 7 15.5 8.5 V9.2 H41.5 Q43 9.2 43 10.7 V22 H5 Z" fill="#e8a33b"/><rect x="3" y="15" width="42" height="25" rx="1.6" fill="#f5c04f"/></svg><div class="n">Jeux</div></div>
<div class="f" style="left:247px;top:183px"><svg width="48" height="48" viewBox="0 0 48 48"><path d="M5 8.5 Q5 7 6.5 7 H14 Q15.5 7 15.5 8.5 V9.2 H41.5 Q43 9.2 43 10.7 V22 H5 Z" fill="#e8a33b"/><rect x="3" y="15" width="42" height="25" rx="1.6" fill="#f5c04f"/><g transform="translate(24 27.6) scale(1.17) translate(-24 -27.5)"><rect x="18" y="21.5" width="12" height="12" fill="none" stroke="#cb9b45" stroke-width="1.5" stroke-dasharray="1.5 1.5"/></g></svg><div class="n">Modèles</div></div>
<div class="f" style="left:3px;top:262px"><svg width="48" height="48" viewBox="0 0 48 48"><path d="M5 8.5 Q5 7 6.5 7 H14 Q15.5 7 15.5 8.5 V9.2 H41.5 Q43 9.2 43 10.7 V22 H5 Z" fill="#e8a33b"/><rect x="3" y="15" width="42" height="25" rx="1.6" fill="#f5c04f"/><g transform="translate(24 27.6) scale(1.17) translate(-24 -27.5)"><g fill="#cb9b45"><path d="M21 21 l9 -1.6 v11.2 h-2 v-7.8 l-5 0.9 v8.2 h-2 z"/><ellipse cx="20.6" cy="31.7" rx="2.5" ry="2"/><ellipse cx="27.6" cy="30.6" rx="2.5" ry="2"/></g></g></svg><div class="n">Musique</div></div>
<div class="f" style="left:125px;top:262px"><svg width="48" height="48" viewBox="0 0 48 48"><path d="M5 8.5 Q5 7 6.5 7 H14 Q15.5 7 15.5 8.5 V9.2 H41.5 Q43 9.2 43 10.7 V22 H5 Z" fill="#e8a33b"/><rect x="3" y="15" width="42" height="25" rx="1.6" fill="#f5c04f"/></svg><div class="n">Nas</div></div>
<div class="f" style="left:247px;top:262px"><svg width="48" height="48" viewBox="0 0 48 48"><path d="M5 8.5 Q5 7 6.5 7 H14 Q15.5 7 15.5 8.5 V9.2 H41.5 Q43 9.2 43 10.7 V22 H5 Z" fill="#e8a33b"/><rect x="3" y="15" width="42" height="25" rx="1.6" fill="#f5c04f"/></svg><div class="n">Numix-master</div></div>
<div class="f" style="left:3px;top:341px"><svg width="48" height="48" viewBox="0 0 48 48"><path d="M5 8.5 Q5 7 6.5 7 H14 Q15.5 7 15.5 8.5 V9.2 H41.5 Q43 9.2 43 10.7 V22 H5 Z" fill="#e8a33b"/><rect x="3" y="15" width="42" height="25" rx="1.6" fill="#f5c04f"/></svg><svg style="left:71px;top:21px" width="28" height="28" viewBox="0 0 28 28"><circle cx="14.2" cy="14.4" r="12.7" fill="#f8f8f8" stroke="#c4c4c4" stroke-width="1"/><path d="M3.6 15.4 Q10 19.4 15.4 14.4 L12.2 11 L23.4 9.4 L22.4 20.6 L19 17.6 Q10.6 24.6 3.6 15.4 Z" fill="#b2b2b2"/></svg></div>
<div class="f" style="left:125px;top:341px"><svg width="48" height="48" viewBox="0 0 48 48"><path d="M5 8.5 Q5 7 6.5 7 H14 Q15.5 7 15.5 8.5 V9.2 H41.5 Q43 9.2 43 10.7 V22 H5 Z" fill="#e8a33b"/><rect x="3" y="15" width="42" height="25" rx="1.6" fill="#f5c04f"/><g transform="translate(24 27.6) scale(1.17) translate(-24 -27.5)"><g fill="#cb9b45"><circle cx="21.4" cy="23" r="2.7"/><path d="M16.8 30.6 q0 -4.4 4.6 -4.4 q2 0 3 1 v3.4 z"/><circle cx="26.6" cy="23.6" r="3.3"/><path d="M21 33.6 q0 -5.8 5.6 -5.8 q5.6 0 5.6 5.8 z"/></g></g></svg></div>
<div class="f" style="left:247px;top:341px"><svg width="48" height="48" viewBox="0 0 48 48"><path d="M5 8.5 Q5 7 6.5 7 H14 Q15.5 7 15.5 8.5 V9.2 H41.5 Q43 9.2 43 10.7 V22 H5 Z" fill="#e8a33b"/><rect x="3" y="15" width="42" height="25" rx="1.6" fill="#f5c04f"/></svg></div>
</div>
<div id="sb"><div class="th"></div></div>
<div id="status"><span>28 éléments (144,5 ko), espace libre : 542,8 Go</span></div>
</div>
</div>

</body></html>
